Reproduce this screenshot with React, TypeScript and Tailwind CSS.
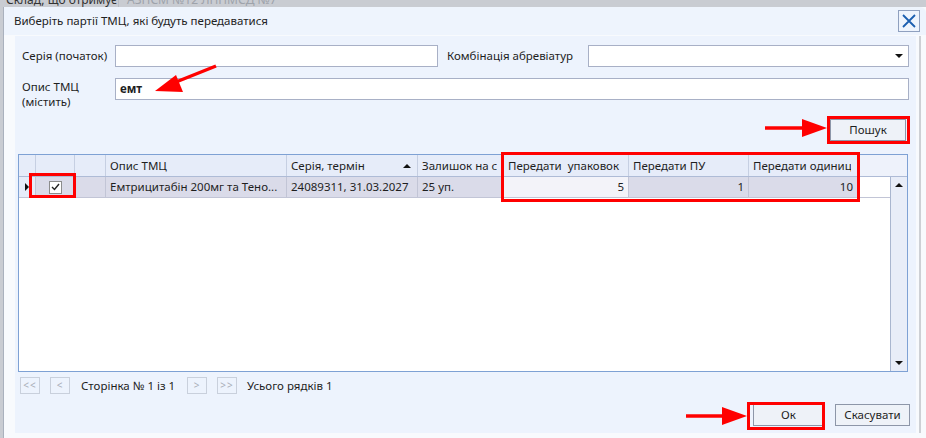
import React from 'react';

const COLS = [
  { w: 'w-[17px]', label: '' },
  { w: 'w-[39px]', label: '' },
  { w: 'w-[31px]', label: '' },
  { w: 'w-[181px]', label: 'Опис ТМЦ' },
  { w: 'w-[131px]', label: 'Серія, термін', sort: true },
  { w: 'w-[86px]', label: 'Залишок на складі' },
  { w: 'w-[125px]', label: 'Передати  упаковок' },
  { w: 'w-[120px]', label: 'Передати ПУ' },
  { w: 'w-[109px]', label: 'Передати одиниці' },
];

function Tri({ dir }: { dir: 'up' | 'down' | 'right' }) {
  if (dir === 'right')
    return (
      <svg width="4" height="8" viewBox="0 0 4 8"><path d="M0 0 L4 4 L0 8 Z" fill="#111" /></svg>
    );
  return (
    <svg width="8" height="4" viewBox="0 0 8 4">
      <path d={dir === 'up' ? 'M0 4 L4 0 L8 4 Z' : 'M0 0 L8 0 L4 4 Z'} fill="#111" />
    </svg>
  );
}

function PagerBtn({ t }: { t: string }) {
  return (
    <div className="w-[20px] h-[17px] border border-[#c9d0dc] flex items-center justify-center text-[10px] text-[#a9aeb8] tracking-[1px]">
      {t}
    </div>
  );
}

export default function App() {
  return (
    <div className="relative w-[926px] h-[438px] overflow-hidden bg-white text-[11.5px] text-[#1e1e1e] font-['Noto_Sans',sans-serif]">
      {/* ── App behind ─────────────────────────────────────────── */}
      <div className="h-[7px] bg-[#c9ccd2] overflow-hidden flex">
        <div className="w-[118px] pl-[6px] -mt-[7px] leading-[14px] text-[12px] text-[#333]">Склад, що отримує</div>
        <div className="flex-1 border-l border-[#b7bbc2] pl-[8px] -mt-[7px] leading-[14px] text-[12px] text-[#9ea3ab]">АЗПСМ №12 ЛППМСД №7</div>
      </div>

      <div className="flex h-[431px]">
        <div className="w-[3px] bg-[#c9ccd2]" />

        {/* ── Dialog ─────────────────────────────────────────────── */}
        <div className="flex-1 flex flex-col border-l border-[#aab1bd] bg-[#f8fafd]">
          <div className="h-[28px] bg-[#eef4fd] flex items-center justify-between pl-[10px] pr-[6px] rounded-tr-[6px]">
            <span className="text-[#222]">Виберіть партії ТМЦ, які будуть передаватися</span>
            <div className="w-[22px] h-[22px] border border-[#8fa0bf] flex items-center justify-center">
              <svg width="14" height="14" viewBox="0 0 14 14">
                <path d="M1 1 L13 13 M13 1 L1 13" stroke="#1b5fb0" strokeWidth="1.8" />
              </svg>
            </div>
          </div>

          <div className="flex-1 flex pl-[11px] pt-[1px] pb-[5px]">
            {/* ── Panel ────────────────────────────────────────── */}
            <div className="w-[901px] bg-[#edf3fd] flex flex-col pt-[9px] pl-[3px]">
              <div className="flex items-center h-[22px] pl-[4px]">
                <div className="w-[93px]">Серія (початок)</div>
                <div className="w-[323px] h-[22px] bg-white border border-[#a8b0c6]" />
                <div className="w-[150px] pl-[9px]">Комбінація абревіатур</div>
                <div className="w-[321px] h-[22px] bg-white border border-[#a8b0c6] flex items-center justify-end pr-[5px]">
                  <Tri dir="down" />
                </div>
              </div>

              <div className="flex items-start mt-[11px] pl-[4px]">
                <div className="w-[93px] leading-[15px] pt-[1px]">
                  Опис ТМЦ
                  <br />
                  (містить)
                </div>
                <div className="w-[794px] h-[22px] bg-white border border-[#a8b0c6] flex items-center pl-[4px] font-bold">емт</div>
              </div>

              <div className="flex justify-end pr-[10px] mt-[10px]">
                <div className="w-[76px] h-[22px] border border-[#8d96a8] bg-[#eef2f8] flex items-center justify-center">Пошук</div>
              </div>

              {/* ── Grid ─────────────────────────────────────── */}
              <div className="mt-[13px] w-[890px] h-[218px] border border-[#7ea1d4] bg-white flex flex-col">
                <div className="h-[22px] flex bg-[#e6ecf9] border-b border-[#aebbd6]">
                  {COLS.map((c, i) => (
                    <div
                      key={i}
                      className={`${c.w} shrink-0 border-r border-[#c6cfe2] flex items-center pl-[4px] pr-[6px] overflow-hidden whitespace-pre`}
                    >
                      <span className="flex-1 overflow-hidden">{c.label}</span>
                      {c.sort && <Tri dir="up" />}
                    </div>
                  ))}
                  <div className="flex-1 bg-[#eef2fb]" />
                </div>

                <div className="flex-1 flex">
                  <div className="flex-1">
                    <div className="h-[21px] flex bg-[#dadbe9] border-b border-[#c2c5d6] whitespace-nowrap">
                      <div className="w-[17px] shrink-0 border-r border-[#c2c5d6] bg-[#e6ecf9] flex items-center justify-center">
                        <Tri dir="right" />
                      </div>
                      <div className="w-[39px] shrink-0 border-r border-[#c2c5d6] flex items-center justify-center">
                        <div className="w-[13px] h-[13px] bg-white border border-[#8c8c8c] flex items-center justify-center">
                          <svg width="9" height="8" viewBox="0 0 9 8">
                            <path d="M1 4 L3.5 6.5 L8 1" stroke="#222" strokeWidth="1.4" fill="none" />
                          </svg>
                        </div>
                      </div>
                      <div className="w-[31px] shrink-0 border-r border-[#c2c5d6]" />
                      <div className="w-[181px] shrink-0 border-r border-[#c2c5d6] flex items-center pl-[4px] overflow-hidden">
                        Емтрицитабін 200мг та Тено...
                      </div>
                      <div className="w-[131px] shrink-0 border-r border-[#c2c5d6] flex items-center pl-[4px]">24089311, 31.03.2027</div>
                      <div className="w-[86px] shrink-0 border-r border-[#c2c5d6] flex items-center pl-[4px]">25 уп.</div>
                      <div className="w-[125px] shrink-0 border-r border-[#c2c5d6] bg-[#f3f3f9] flex items-center justify-end pr-[4px]">5</div>
                      <div className="w-[120px] shrink-0 border-r border-[#c2c5d6] flex items-center justify-end pr-[4px]">1</div>
                      <div className="w-[109px] shrink-0 border-r border-[#c2c5d6] flex items-center justify-end pr-[4px]">10</div>
                      <div className="flex-1 bg-white" />
                    </div>
                  </div>
                  <div className="w-[17px] bg-[#e8edf8] border-l border-[#a9b6cf] flex flex-col items-center justify-between pt-[6px] pb-[6px]">
                    <Tri dir="up" />
                    <Tri dir="down" />
                  </div>
                </div>
              </div>

              {/* ── Pager ────────────────────────────────────── */}
              <div className="flex items-center mt-[5px] pl-[2px] h-[17px]">
                <PagerBtn t="<<" />
                <div className="w-[10px]" />
                <PagerBtn t="<" />
                <span className="ml-[11px] w-[106px]">Сторінка № 1 із 1</span>
                <PagerBtn t=">" />
                <div className="w-[10px]" />
                <PagerBtn t=">>" />
                <span className="ml-[10px]">Усього рядків 1</span>
              </div>

              <div className="flex justify-end gap-[11px] pr-[6px] mt-[10px]">
                <div className="w-[71px] h-[22px] border border-[#8d96a8] bg-[#eef2f8] flex items-center justify-center">Ок</div>
                <div className="w-[75px] h-[22px] border border-[#8d96a8] bg-[#eef2f8] flex items-center justify-center">Скасувати</div>
              </div>
            </div>
            <div className="w-[3px]" />
            <div className="w-[2px] bg-[#cdd0d5]" />
          </div>
        </div>
      </div>

      {/* ── Annotations ────────────────────────────────────────── */}
      <div className="absolute left-[827px] top-[116px] w-[83px] h-[28px] border-[3px] border-[#ff0000]" />
      <div className="absolute left-[29px] top-[173px] w-[47px] h-[25px] border-[3px] border-[#ff0000]" />
      <div className="absolute left-[501px] top-[152px] w-[359px] h-[50px] border-[3px] border-[#ff0000]" />
      <div className="absolute left-[747px] top-[402px] w-[78px] h-[28px] border-[3px] border-[#ff0000]" />

      <svg className="absolute left-0 top-0 pointer-events-none" width="926" height="438">
        <g fill="#f00" stroke="#f00">
          <line x1="216" y1="66" x2="176" y2="82" strokeWidth="3.5" />
          <path d="M155 91 L176 75 L183 92 Z" stroke="none" />
          <line x1="765" y1="128" x2="803" y2="128" strokeWidth="3.5" />
          <path d="M827 128 L802 119 L802 137 Z" stroke="none" />
          <line x1="686" y1="416" x2="723" y2="416" strokeWidth="3.5" />
          <path d="M747 416 L722 407 L722 425 Z" stroke="none" />
        </g>
      </svg>
    </div>
  );
}
